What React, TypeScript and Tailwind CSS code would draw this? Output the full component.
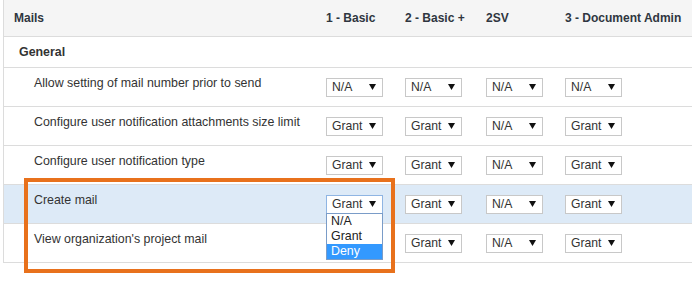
const columns = ["1 - Basic", "2 - Basic +", "2SV", "3 - Document Admin"];

const rows = [
  { label: "Allow setting of mail number prior to send", values: ["N/A", "N/A", "N/A", "N/A"] },
  { label: "Configure user notification attachments size limit", values: ["Grant", "Grant", "N/A", "Grant"] },
  { label: "Configure user notification type", values: ["Grant", "Grant", "N/A", "Grant"] },
  { label: "Create mail", values: ["Grant", "Grant", "N/A", "Grant"], active: true },
  // first select sits under the open dropdown, so it isn't drawn
  { label: "View organization's project mail", values: ["", "Grant", "N/A", "Grant"] },
];

const gridCols = "grid grid-cols-[322px_79px_81px_79px_1fr]";

function Arrow() {
  return (
    <svg width="7" height="6" viewBox="0 0 7 6" className="shrink-0">
      <polygon points="0,0 7,0 3.5,6" fill="#111" />
    </svg>
  );
}

function Select({ value, open }: { value: string; open?: boolean }) {
  return (
    <div
      className={`relative flex h-[19px] w-[57px] items-center justify-between border bg-white pl-[5px] pr-[6px] text-[12.2px] leading-none text-[#333] ${
        open ? "border-[#8fb5e3]" : "border-[#c8c8c8]"
      }`}
    >
      <span>{value}</span>
      <Arrow />
      {open && (
        <div className="absolute left-[-1px] top-full z-10 flex w-[57px] flex-col border border-[#7a9cc8] bg-white text-[12.4px] leading-[15px] text-[#222]">
          <span className="pl-[4px]">N/A</span>
          <span className="pl-[4px]">Grant</span>
          <span className="bg-[#3399ff] pl-[4px] text-white">Deny</span>
        </div>
      )}
    </div>
  );
}

export default function App() {
  return (
    <div className="relative h-[282px] w-[692px] overflow-hidden bg-white font-['Liberation_Sans',Arial,sans-serif] text-[#333]">
      <div className="ml-[3px] border-l border-[#dcdcdc]">
        {/* header */}
        <div className={`${gridCols} h-[37px] items-center border-b border-[#dcdcdc] bg-[#f5f5f5] text-[12px] font-bold text-[#2f3640]`}>
          <div className="pl-[10px]">Mails</div>
          {columns.map((c) => (
            <div key={c} className="whitespace-nowrap">{c}</div>
          ))}
        </div>

        <div className="flex h-[31px] items-center border-b border-[#dcdcdc] pl-[15px] text-[12.4px] font-bold text-[#333]">
          General
        </div>

        {rows.map((r) => (
          <div
            key={r.label}
            className={`${gridCols} h-[39px] items-center border-b border-[#dcdcdc] ${r.active ? "bg-[#ddeaf7]" : ""}`}
          >
            <div className="self-start pl-[30px] pt-[8px] text-[12.4px] leading-[15px] whitespace-nowrap">{r.label}</div>
            {r.values.map((v, i) => (
              <div key={i}>{v && <Select value={v} open={r.active && i === 0} />}</div>
            ))}
          </div>
        ))}
      </div>

      {/* highlight annotation */}
      <div className="absolute left-[24px] top-[178px] h-[95px] w-[371px] border-4 border-[#e8711c]" />
    </div>
  );
}
